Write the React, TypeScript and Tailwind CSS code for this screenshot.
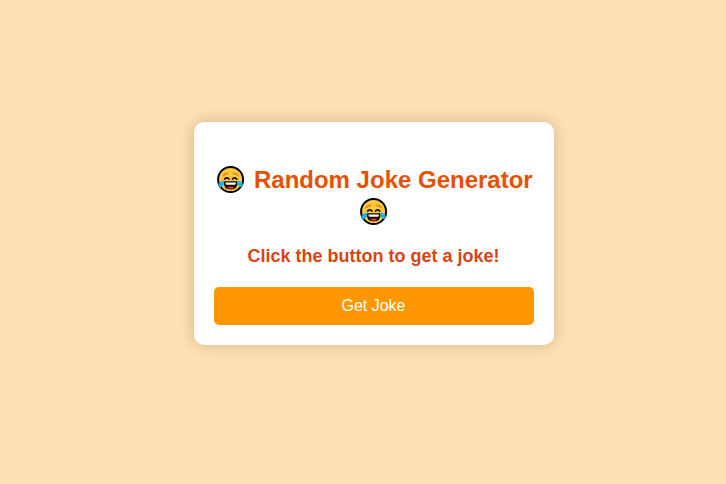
import React from "react";

function Joy() {
  return (
    <svg viewBox="0 0 28 28" className="mx-[2.5px] inline-block h-7 w-7 align-[-6px]">
      <circle cx="13.6" cy="13.5" r="12.5" fill="#ffc83d" stroke="#000" strokeWidth="2" />
      <g fill="none" strokeLinecap="round">
        <path d="M6.4 9.3Q7.7 7.6 10.8 7.5M16.6 7.5Q19.7 7.6 21 9.3" stroke="#e29414" strokeWidth="2" />
        <path d="M7.7 13Q9.9 10.9 11.9 13M15.5 13Q17.5 10.9 19.7 13" stroke="#20150a" strokeWidth="1.8" />
      </g>
      <path d="M6.8 15.2H20.6Q21 23.6 13.7 23.6Q6.4 23.6 6.8 15.2Z" fill="#120806" />
      <path d="M8.6 16.4H18.8V17.8Q18.6 18.7 17.7 18.7H9.7Q8.8 18.7 8.6 17.8Z" fill="#fff" />
      <path d="M10 21.8Q13.7 19 17.4 21.8Q13.7 23.8 10 21.8Z" fill="#e43a24" />
      <path d="M7.5 14.6C4.6 14.8 1.7 16.6 1.5 18.8C1.7 21.8 5.4 21.4 6.4 18.9Q7.1 17.1 7.5 14.6Z" fill="#19b5ee" />
      <path d="M19.9 14.6C22.8 14.8 25.5 16.6 25.7 18.8C25.5 21.8 22 21.4 21 18.9Q20.3 17.1 19.9 14.6Z" fill="#19b5ee" />
    </svg>
  );
}

export default function App() {
  return (
    <main className="flex h-[484px] items-center justify-center bg-[#ffe0b2] pb-[17px] pl-[21px] font-['Liberation_Sans',Arial,sans-serif]">
      <section className="w-[360px] rounded-[10px] bg-white p-5 text-center shadow-[0_0_15px_rgba(0,0,0,0.2)]">
        <h1 className="mt-[22px] text-2xl leading-8 font-bold text-[#e65100]">
          <Joy /> Random Joke Generator <Joy />
        </h1>
        <p className="mt-[17px] text-lg leading-[22px] font-bold text-[#d84315]">Click the button to get a joke!</p>
        <button className="mt-5 h-[38px] w-full rounded-[5px] bg-[#ff9800] text-base text-white">Get Joke</button>
      </section>
    </main>
  );
}
